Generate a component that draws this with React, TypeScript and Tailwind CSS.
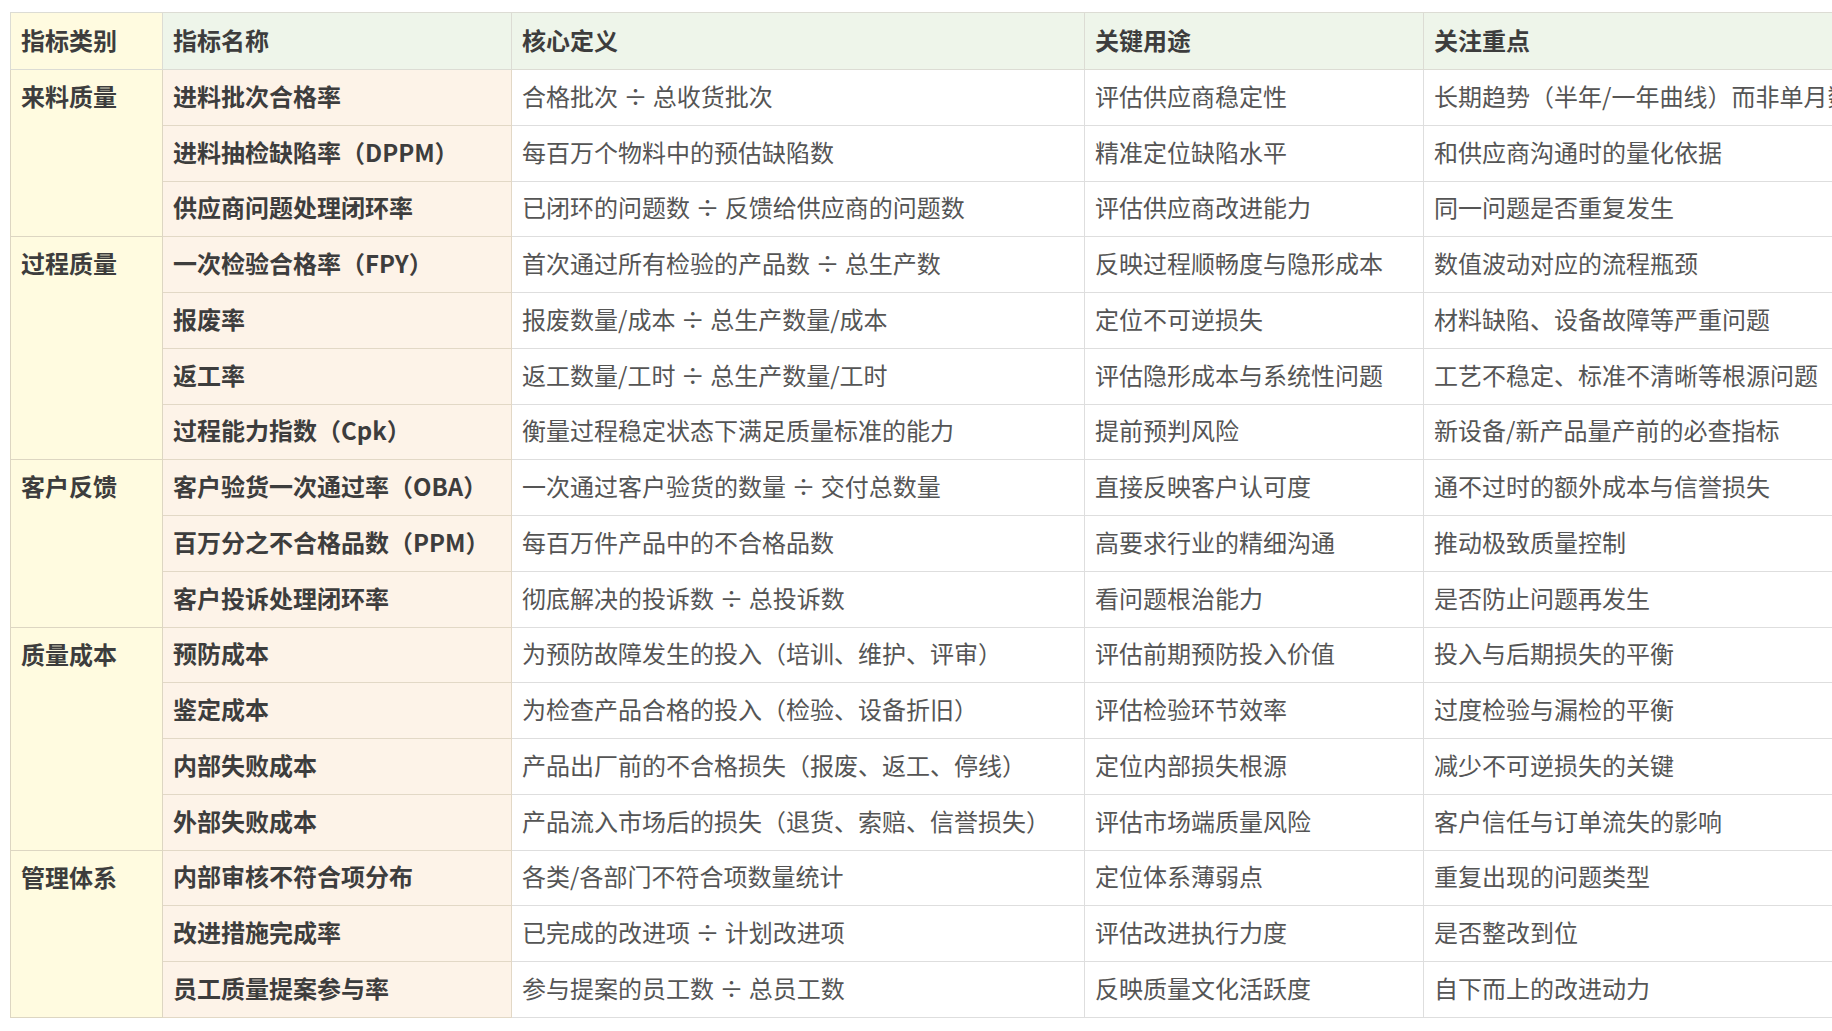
import React from 'react';

type Row = { name: string; def: string; use: string; focus: string };
type Group = { category: string; rows: Row[] };

const groups: Group[] = [
  {
    category: '来料质量',
    rows: [
      { name: '进料批次合格率', def: '合格批次 ÷ 总收货批次', use: '评估供应商稳定性', focus: '长期趋势（半年/一年曲线）而非单月数据' },
      { name: '进料抽检缺陷率（DPPM）', def: '每百万个物料中的预估缺陷数', use: '精准定位缺陷水平', focus: '和供应商沟通时的量化依据' },
      { name: '供应商问题处理闭环率', def: '已闭环的问题数 ÷ 反馈给供应商的问题数', use: '评估供应商改进能力', focus: '同一问题是否重复发生' },
    ],
  },
  {
    category: '过程质量',
    rows: [
      { name: '一次检验合格率（FPY）', def: '首次通过所有检验的产品数 ÷ 总生产数', use: '反映过程顺畅度与隐形成本', focus: '数值波动对应的流程瓶颈' },
      { name: '报废率', def: '报废数量/成本 ÷ 总生产数量/成本', use: '定位不可逆损失', focus: '材料缺陷、设备故障等严重问题' },
      { name: '返工率', def: '返工数量/工时 ÷ 总生产数量/工时', use: '评估隐形成本与系统性问题', focus: '工艺不稳定、标准不清晰等根源问题' },
      { name: '过程能力指数（Cpk）', def: '衡量过程稳定状态下满足质量标准的能力', use: '提前预判风险', focus: '新设备/新产品量产前的必查指标' },
    ],
  },
  {
    category: '客户反馈',
    rows: [
      { name: '客户验货一次通过率（OBA）', def: '一次通过客户验货的数量 ÷ 交付总数量', use: '直接反映客户认可度', focus: '通不过时的额外成本与信誉损失' },
      { name: '百万分之不合格品数（PPM）', def: '每百万件产品中的不合格品数', use: '高要求行业的精细沟通', focus: '推动极致质量控制' },
      { name: '客户投诉处理闭环率', def: '彻底解决的投诉数 ÷ 总投诉数', use: '看问题根治能力', focus: '是否防止问题再发生' },
    ],
  },
  {
    category: '质量成本',
    rows: [
      { name: '预防成本', def: '为预防故障发生的投入（培训、维护、评审）', use: '评估前期预防投入价值', focus: '投入与后期损失的平衡' },
      { name: '鉴定成本', def: '为检查产品合格的投入（检验、设备折旧）', use: '评估检验环节效率', focus: '过度检验与漏检的平衡' },
      { name: '内部失败成本', def: '产品出厂前的不合格损失（报废、返工、停线）', use: '定位内部损失根源', focus: '减少不可逆损失的关键' },
      { name: '外部失败成本', def: '产品流入市场后的损失（退货、索赔、信誉损失）', use: '评估市场端质量风险', focus: '客户信任与订单流失的影响' },
    ],
  },
  {
    category: '管理体系',
    rows: [
      { name: '内部审核不符合项分布', def: '各类/各部门不符合项数量统计', use: '定位体系薄弱点', focus: '重复出现的问题类型' },
      { name: '改进措施完成率', def: '已完成的改进项 ÷ 计划改进项', use: '评估改进执行力度', focus: '是否整改到位' },
      { name: '员工质量提案参与率', def: '参与提案的员工数 ÷ 总员工数', use: '反映质量文化活跃度', focus: '自下而上的改进动力' },
    ],
  },
];

const headers = ['指标类别', '指标名称', '核心定义', '关键用途', '关注重点'];

export default function App() {
  return (
    <div
      className="w-[1832px] h-[1031px] overflow-hidden bg-white pt-[12px] pl-[10px]"
      style={{ fontFamily: '"Noto Sans CJK SC", "Noto Sans", sans-serif' }}
    >
      <table className="table-fixed border-collapse w-[2010px] text-[24px] leading-[32px] whitespace-nowrap">
        <colgroup>
          <col className="w-[152px]" />
          <col className="w-[349px]" />
          <col className="w-[573px]" />
          <col className="w-[339px]" />
          <col className="w-[597px]" />
        </colgroup>
        <thead>
          <tr className="h-[57px]">
            {headers.map((h, i) => (
              <th
                key={h}
                className={`border border-[#dcdcd4] pl-[10px] pr-3 pb-[3px] text-left align-middle font-bold text-[#3d3d3d] ${
                  i === 0 ? 'bg-[#fffbe0]' : 'bg-[#eef5ea]'
                }`}
              >
                {h}
              </th>
            ))}
          </tr>
        </thead>
        <tbody>
          {groups.map((g) =>
            g.rows.map((r, idx) => (
              <tr key={r.name} className="h-[55.76px]">
                {idx === 0 && (
                  <td
                    rowSpan={g.rows.length}
                    className="border border-[#ddd6c2] bg-[#fffbe0] pl-[10px] pr-3 pt-[10px] align-top font-bold text-[#3d3d3d]"
                  >
                    {g.category}
                  </td>
                )}
                <td className="border border-[#e2d8c6] bg-[#fdf3e8] pl-[10px] pr-3 pb-[3px] align-middle font-bold text-[#3d3d3d]">
                  {r.name}
                </td>
                <td className="border border-[#dedede] pl-[10px] pr-3 pb-[3px] align-middle text-[#555555]">{r.def}</td>
                <td className="border border-[#dedede] pl-[10px] pr-3 pb-[3px] align-middle text-[#555555]">{r.use}</td>
                <td className="border border-[#dedede] pl-[10px] pr-3 pb-[3px] align-middle text-[#555555]">{r.focus}</td>
              </tr>
            ))
          )}
        </tbody>
      </table>
    </div>
  );
}
